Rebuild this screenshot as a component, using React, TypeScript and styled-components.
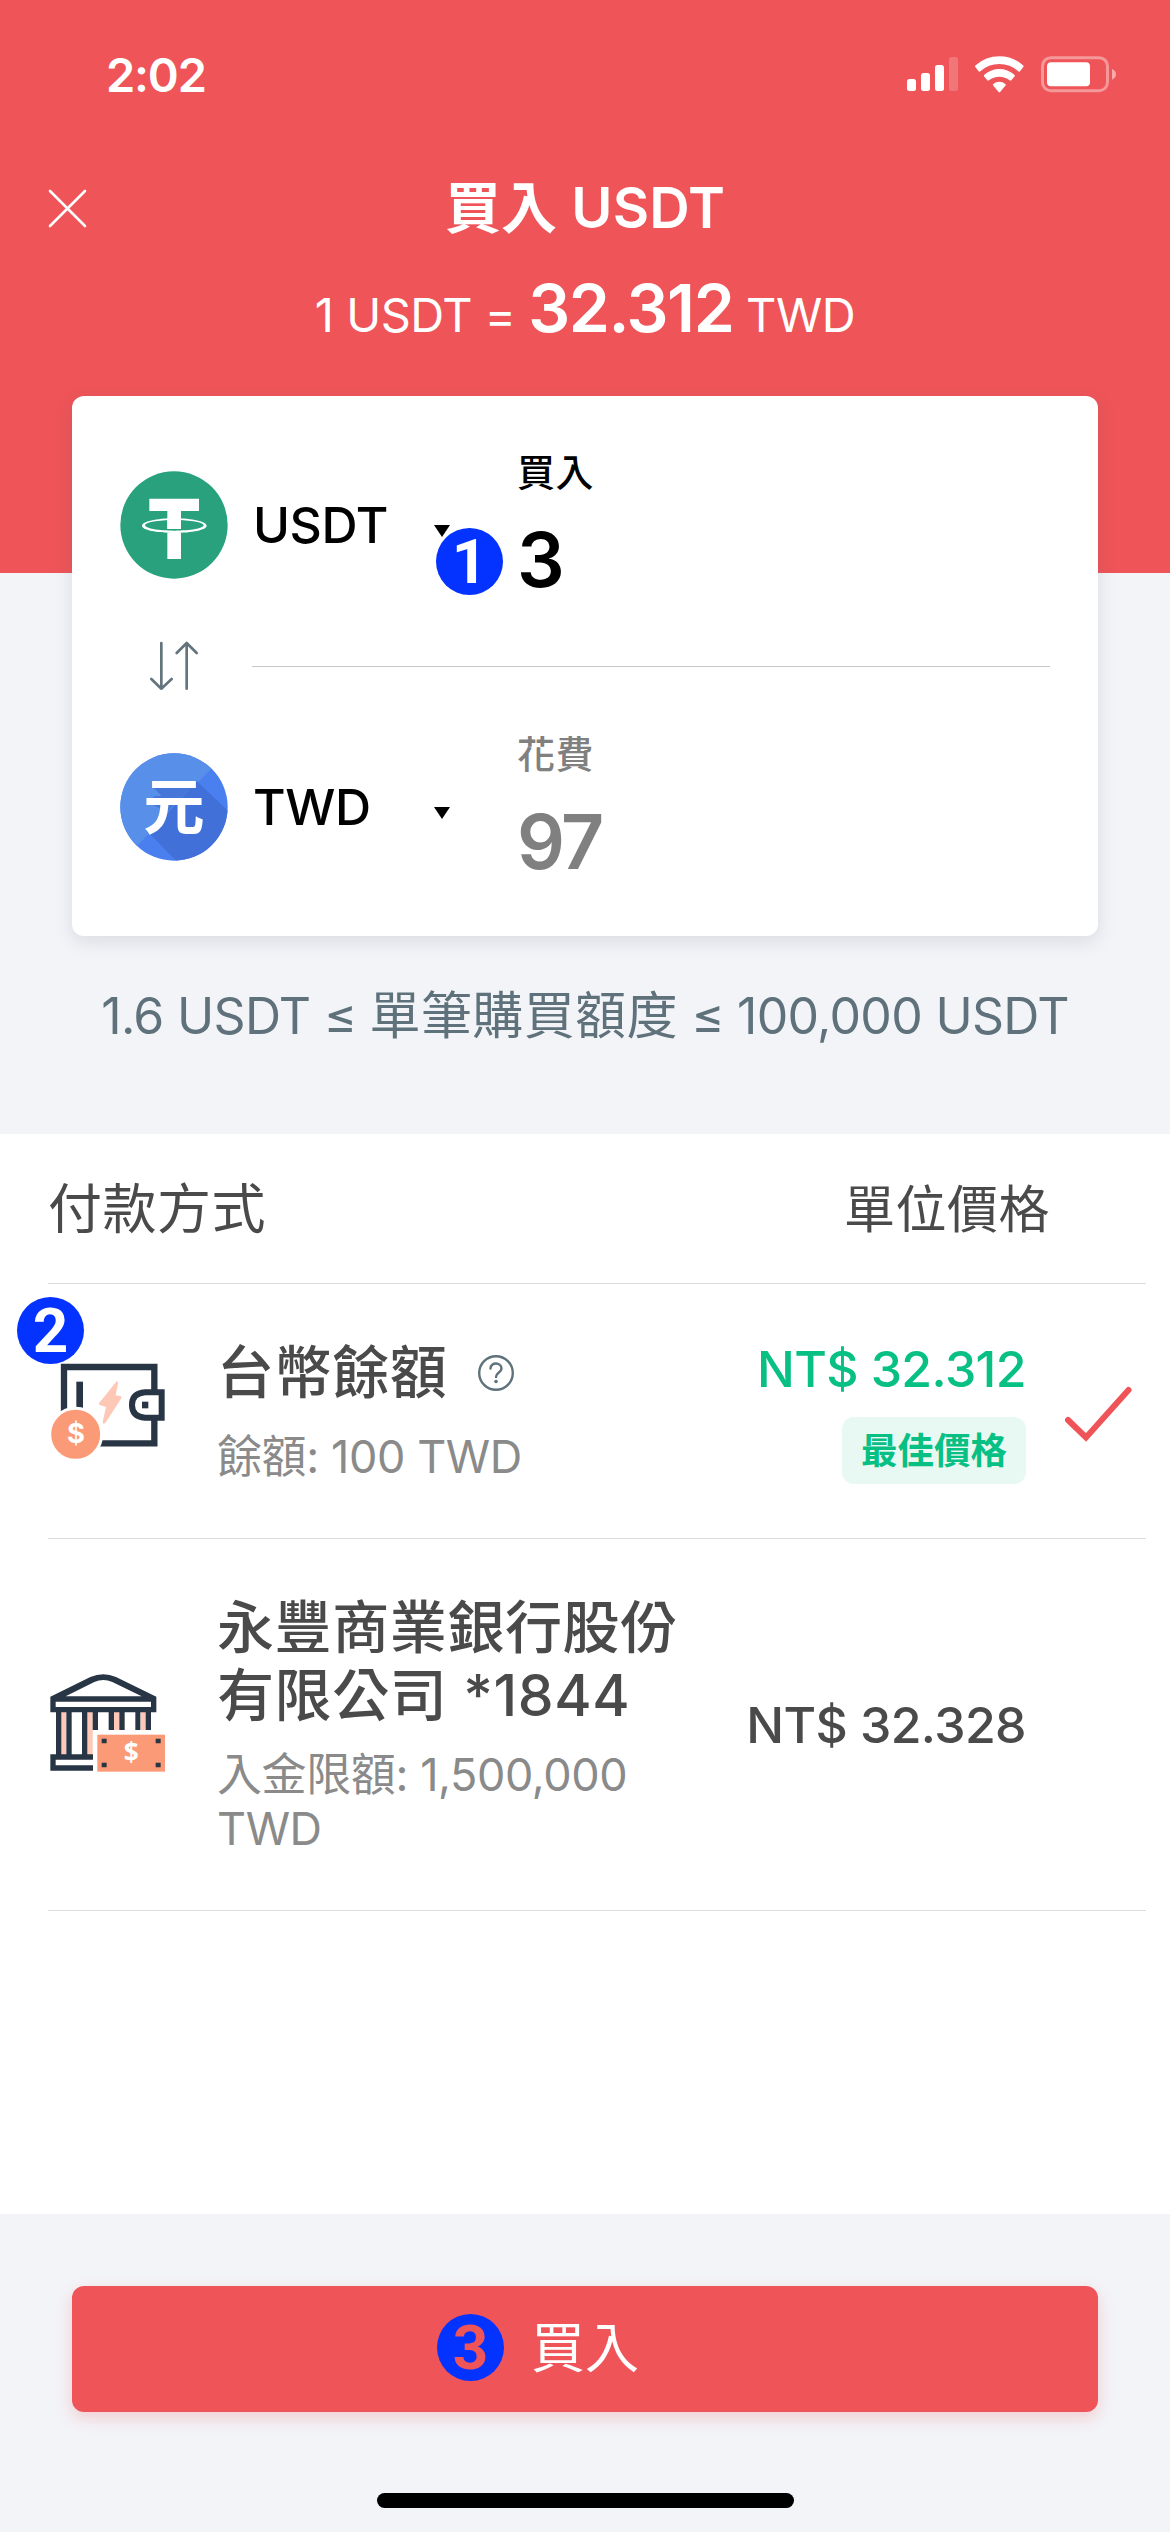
import React from "react";
import styled, { createGlobalStyle } from "styled-components";

const red = "#ee5458";
const mist = "#f3f4f8";
const ink = "#4a4a4a";
const slate = "#5f727c";
const navy = "#283545";
const coral = "#fb9a76";
const blush = "#ffc7b6";
const fontStack = `Inter, "Noto Sans CJK TC", sans-serif`;

const GlobalStyle = createGlobalStyle`
  * { box-sizing: border-box; }
  body { margin: 0; background: #fff; font-family: ${fontStack}; }
  svg { display: block; flex: none; }
`;

const Screen = styled.main`
  width: 1170px;
  height: 2532px;
  display: flex;
  flex-direction: column;
  overflow: hidden;
  background: #fff;
`;

const Header = styled.header`
  height: 573px;
  flex: none;
  background: ${red};
  color: #fff;
`;

const StatusBar = styled.div`
  height: 148px;
  padding: 0 53px 0 106px;
  display: flex;
  align-items: center;
  justify-content: space-between;
`;

const Clock = styled.span`
  font-size: 47px;
  font-weight: 600;
  letter-spacing: -1.2px;
`;

const StatusIcons = styled.div`
  display: flex;
  align-items: center;
  gap: 17px;
`;

const NavBar = styled.div`
  height: 120px;
  padding: 0 48px;
  display: grid;
  grid-template-columns: 40px 1fr 40px;
  align-items: center;
`;

const Title = styled.h1`
  margin: 0;
  text-align: center;
  font-size: 56px;
  line-height: 80px;
  font-weight: 600;
  letter-spacing: 0.1px;
  white-space: pre;
`;

const Rate = styled.p`
  margin: 0;
  height: 80px;
  display: flex;
  justify-content: center;
  align-items: baseline;
  font-size: 47px;
  line-height: 80px;
  letter-spacing: -0.5px;
  white-space: pre;
`;

const RateValue = styled.strong`
  font-size: 66px;
  font-weight: 600;
  letter-spacing: -1.4px;
`;

const Summary = styled.section`
  height: 561px;
  flex: none;
  padding: 0 72px;
  background: ${mist};
`;

const Card = styled.div`
  position: relative;
  margin-top: -177px;
  height: 540px;
  border-radius: 12px;
  background: #fff;
  box-shadow: 0 6px 18px rgba(90, 100, 120, 0.16);
`;

const AmountRow = styled.div`
  height: 258px;
  padding: 0 48px;
  display: grid;
  grid-template-columns: 132px 265px 1fr;
  align-items: center;
`;

const Currency = styled.div`
  display: flex;
  align-items: center;
  justify-content: space-between;
  padding: 0 67px 0 1px;
  font-size: 50px;
  line-height: 60px;
  font-weight: 500;
  letter-spacing: -0.4px;
  color: #000;
`;

const Caret = styled.i`
  margin-top: 11px;
  border-style: solid;
  border-width: 12px 8px 0;
  border-color: #000 transparent transparent;
`;

const Field = styled.div<{ $muted?: boolean }>`
  display: flex;
  flex-direction: column;
  gap: 15px;
  color: ${(p) => (p.$muted ? "#808080" : "#000")};
`;

const FieldLabel = styled.span`
  font-size: 38px;
  line-height: 54px;
  font-weight: 500;
  letter-spacing: 0.4px;
`;

const FieldValue = styled.span`
  font-size: 75px;
  line-height: 91px;
  font-weight: 600;
  letter-spacing: -2.5px;
`;

const SwapRow = styled.div`
  height: 24px;
  padding: 0 48px;
  display: flex;
  align-items: center;
`;

const SwapSlot = styled.div`
  width: 132px;
  padding-left: 29px;
`;

const SwapLine = styled.div`
  flex: 1;
  height: 1px;
  background: #c4c6c8;
`;

const Limits = styled.p`
  margin: 46px -40px 0;
  text-align: center;
  font-size: 50px;
  line-height: 68px;
  letter-spacing: -0.7px;
  white-space: nowrap;
  color: ${slate};
`;

const LimitsLabel = styled.span`
  font-size: 51px;
  letter-spacing: 0.4px;
`;

const Methods = styled.section`
  height: 1080px;
  flex: none;
  padding: 0 24px 0 48px;
`;

const MethodsHead = styled.div`
  height: 150px;
  padding-right: 96px;
  display: flex;
  align-items: center;
  justify-content: space-between;
  border-bottom: 1px solid #dadcdd;
  color: ${ink};
`;

const HeadCell = styled.span<{ $size: number }>`
  padding-top: 2px;
  font-size: ${(p) => p.$size}px;
  line-height: 68px;
  letter-spacing: 0.5px;
`;

const MethodRow = styled.div<{ $height: number }>`
  position: relative;
  height: ${(p) => p.$height}px;
  display: flex;
  align-items: center;
  border-bottom: 1px solid #dadcdd;
`;

const MethodIcon = styled.div`
  padding-bottom: 3px;
`;

const MethodText = styled.div<{ $lift?: number }>`
  width: 470px;
  margin-left: 49px;
  padding-bottom: ${(p) => p.$lift ?? 0}px;
`;

const MethodName = styled.div<{ $height?: number }>`
  min-height: ${(p) => p.$height ?? 68}px;
  display: flex;
  align-items: center;
  gap: 30px;
  font-size: 57px;
  line-height: 68px;
  font-weight: 500;
  letter-spacing: 0.6px;
  color: ${ink};
`;

const MethodNote = styled.div<{ $gap: number }>`
  margin-top: ${(p) => p.$gap}px;
  font-size: 45px;
  line-height: 54px;
  letter-spacing: -0.4px;
  color: #8a8a8a;
`;

const PriceColumn = styled.div`
  flex: 1;
  margin-right: 120px;
  display: flex;
  flex-direction: column;
  align-items: flex-end;
  gap: 18px;
`;

const Price = styled.span<{ $best?: boolean }>`
  font-size: 50px;
  line-height: 60px;
  font-weight: 500;
  letter-spacing: -0.6px;
  white-space: nowrap;
  color: ${(p) => (p.$best ? "#08bf84" : ink)};
`;

const BestTag = styled.span`
  height: 67px;
  padding: 1px 19px 0;
  border-radius: 12px;
  background: #e8f8f3;
  color: #08bf84;
  font-size: 36.5px;
  line-height: 67px;
  font-weight: 700;
`;

const CheckSlot = styled.div`
  position: absolute;
  right: 14px;
  top: 102px;
`;

const Footer = styled.footer`
  flex: 1;
  padding: 72px 72px 24px;
  display: flex;
  flex-direction: column;
  justify-content: space-between;
  align-items: center;
  background: ${mist};
`;

const BuyButton = styled.button`
  position: relative;
  width: 100%;
  height: 126px;
  border: 0;
  border-radius: 12px;
  background: ${red};
  color: #fff;
  font: 400 54px/80px ${fontStack};
  box-shadow: 0 6px 16px rgba(238, 84, 88, 0.24);
`;

const HomeIndicator = styled.div`
  width: 417px;
  height: 15px;
  border-radius: 8px;
  background: #000;
`;

const StepBadge = styled.span<{ $x: number; $y: number; $color?: string }>`
  position: absolute;
  left: ${(p) => p.$x}px;
  top: ${(p) => p.$y}px;
  width: 67px;
  height: 67px;
  border-radius: 50%;
  background: #0433ff;
  color: ${(p) => p.$color ?? "#fff"};
  font: 700 62px/68px Roboto, sans-serif;
  text-align: center;
`;

const SignalIcon = () => (
  <svg width="51" height="36" viewBox="0 0 51 36" fill="#fff">
    <rect x="0" y="23" width="9" height="12" rx="2.5" />
    <rect x="14" y="17" width="9" height="18" rx="2.5" />
    <rect x="28" y="9" width="9" height="26" rx="2.5" />
    <rect x="42" y="1" width="9" height="34" rx="2.5" opacity="0.2" />
  </svg>
);

const WifiIcon = () => (
  <svg width="49" height="37" viewBox="284 44 147 111" fill="#fff">
    <path d="M285 77Q283 75 286 72Q316 45 357 45Q398 45 428 72Q431 75 429 77L419 90Q417 93 414 90Q390 68 357 68Q324 68 300 90Q297 93 295 90Z" />
    <path d="M311 105Q309 103 312 100Q332 83 357 83Q382 83 402 100Q405 103 403 105L393 117Q391 119 388 117Q374 106 357 106Q340 106 326 117Q323 119 321 117Z" />
    <path d="M338 132Q336 130 339 128Q347 121 357 121Q367 121 375 128Q378 130 376 132L360 151Q357 155 354 151Z" />
  </svg>
);

const BatteryIcon = () => (
  <svg width="76" height="37" viewBox="480 47 228 111" fill="#fff">
    <rect x="484.500" y="52" width="195" height="99" rx="25" fill="none" stroke="#fff" strokeWidth="9" opacity="0.4" />
    <rect x="498" y="66" width="129" height="72" rx="12" />
    <path d="M693 86Q705 91 705 102Q705 113 693 118Z" opacity="0.5" />
  </svg>
);

const CloseIcon = () => (
  <svg width="39" height="39" viewBox="0 0 39 39" stroke="#fff" strokeWidth="2.6" strokeLinecap="round">
    <path d="M2 2L37 37M37 2L2 37" />
  </svg>
);

const TetherIcon = () => (
  <svg width="108" height="108" viewBox="15 17 324 324">
    <circle cx="177" cy="179" r="161" fill="#28a17c" />
    <path d="M103 100H252V137H198V191H157V137H103Z" fill="#fff" />
    <path d="M157 202H198V281H157Z" fill="#fff" />
    <path
      fillRule="evenodd"
      fill="#fff"
      d="M81 181.500C81 169 124 159 178 159S275 169 275 181.500S232 203 178 203S81 194 81 181.500ZM90 180C90 189 129 196 178 196S266 189 266 180S227 164 178 164S90 171 90 180Z"
    />
    <path d="M157 159H198V190H157Z" fill="#fff" />
  </svg>
);

const YuanIcon = () => (
  <svg width="108" height="108" viewBox="15 863 324 324">
    <defs>
      <clipPath id="coin">
        <circle cx="177" cy="1025" r="161" />
      </clipPath>
    </defs>
    <g clipPath="url(#coin)">
      <rect x="15" y="863" width="324" height="324" fill="#4a7fef" />
      <path d="M15 863H334L67 1141L15 1190Z" fill="#588fe9" />
      <path d="M245 947L345 1042V1190H187L103 1104Z" fill="#4170d8" />
      <path d="M111 963L245 948L157 1040L96 1009L120 992H140Z" fill="#4677d8" />
    </g>
    <text x="177" y="1090" textAnchor="middle" fontSize="184" fontWeight="700" fontFamily='"Noto Sans CJK TC", sans-serif' fill="#fff">
      元
    </text>
  </svg>
);

const SwapIcon = () => (
  <svg width="50" height="50" viewBox="102 528 150 150" fill="none" stroke="#64747d" strokeWidth="8" strokeLinecap="round" strokeLinejoin="round">
    <path d="M139 534V671M109 642L139 671L170 642" />
    <path d="M215 671V534M185 564L215 534L245 564" />
  </svg>
);

const WalletIcon = () => (
  <svg width="120" height="100" viewBox="24 60 360 300">
    <path d="M72 215V81H343V150M343 240V310H178" fill="none" stroke={navy} strokeWidth="19" />
    <path d="M119 125V205" stroke={navy} strokeWidth="20" />
    <path d="M365 157V233H315Q276 230 276 195T315 157Z" fill="#fff" stroke={navy} strokeWidth="18" />
    <rect x="306" y="185" width="19" height="20" fill={navy} />
    <path d="M230 124Q235 123 234 129L227 166L243 169Q246 171 243 176L196 249Q189 254 188 246L198 201L179 195Q175 192 178 188Z" fill={blush} />
    <circle cx="107" cy="283" r="78" fill={coral} stroke="#fff" strokeWidth="9" />
    <text x="108" y="310" textAnchor="middle" fontSize="82" fontWeight="700" fontFamily="Inter, sans-serif" fill="#fff">
      $
    </text>
  </svg>
);

const BankIcon = () => (
  <svg width="120" height="100" viewBox="24 40 360 300">
    <path d="M64 156H78V286H64ZM142 156H158V286H142ZM222 156H238V212H222ZM302 156H317V212H302Z" fill={blush} />
    <path
      d="M48 156H64V286H48ZM79 156H95V286H79ZM126 156H142V286H126ZM158 156H174V212H158ZM206 156H222V212H206ZM238 156H254V212H238ZM286 156H301V212H286ZM317 156H333V212H317Z"
      fill={navy}
    />
    <path d="M31 111L151 52Q190 36 228 52L349 111V158H31ZM77 110H305L217 67Q190 55 163 67ZM47 126V142H333V126Z" fillRule="evenodd" fill={navy} />
    <path d="M31 284H159V300H47V317H159V333H31Z" fill={navy} />
    <path d="M159 211H384V340H159Z" fill="#fff" />
    <rect x="172" y="225" width="203" height="111" fill={coral} />
    <path d="M185 237H200V251H185ZM347 237H362V251H347ZM185 309H200V323H185ZM347 309H362V323H347Z" fill={navy} />
    <text x="274" y="308" textAnchor="middle" fontSize="79" fontWeight="700" fontFamily='"Open Sans", sans-serif' fill="#fff">
      $
    </text>
  </svg>
);

const HelpIcon = () => (
  <svg width="38" height="38" viewBox="0 0 38 38" fill="none" stroke={slate} strokeWidth="2.400" strokeLinecap="round">
    <circle cx="19" cy="19" r="16.800" />
    <path d="M13.500 14.500C13.500 7.800 24.500 8 24.500 14.500C24.500 18.500 19 18.500 19 23" />
    <circle cx="19" cy="27.500" r="1.800" fill={slate} stroke="none" />
  </svg>
);

const CheckIcon = () => (
  <svg width="68" height="60" viewBox="0 0 68 60" fill="none" stroke={red} strokeWidth="6" strokeLinecap="round">
    <path d="M4 34L22 51.500L64.500 4" strokeLinejoin="miter" />
  </svg>
);

export default function App() {
  return (
    <Screen>
      <GlobalStyle />
      <Header>
        <StatusBar>
          <Clock>2:02</Clock>
          <StatusIcons>
            <SignalIcon />
            <WifiIcon />
            <BatteryIcon />
          </StatusIcons>
        </StatusBar>
        <NavBar>
          <CloseIcon />
          <Title>買入 USDT</Title>
        </NavBar>
        <Rate>
          1 USDT = <RateValue>32.312</RateValue> TWD
        </Rate>
      </Header>

      <Summary>
        <Card>
          <AmountRow>
            <TetherIcon />
            <Currency>
              USDT
              <Caret />
            </Currency>
            <Field>
              <FieldLabel>買入</FieldLabel>
              <FieldValue>3</FieldValue>
            </Field>
          </AmountRow>
          <SwapRow>
            <SwapSlot>
              <SwapIcon />
            </SwapSlot>
            <SwapLine />
          </SwapRow>
          <AmountRow>
            <YuanIcon />
            <Currency>
              TWD
              <Caret />
            </Currency>
            <Field $muted>
              <FieldLabel>花費</FieldLabel>
              <FieldValue>97</FieldValue>
            </Field>
          </AmountRow>
          <StepBadge $x={364} $y={132}>1</StepBadge>
        </Card>
        <Limits>
          1.6 USDT ≤ <LimitsLabel>單筆購買額度</LimitsLabel> ≤ 100,000 USDT
        </Limits>
      </Summary>

      <Methods>
        <MethodsHead>
          <HeadCell $size={54}>付款方式</HeadCell>
          <HeadCell $size={51}>單位價格</HeadCell>
        </MethodsHead>
        <MethodRow $height={255}>
          <MethodIcon>
            <WalletIcon />
          </MethodIcon>
          <MethodText $lift={3}>
            <MethodName $height={75}>
              台幣餘額
              <HelpIcon />
            </MethodName>
            <MethodNote $gap={20}>餘額: 100 TWD</MethodNote>
          </MethodText>
          <PriceColumn>
            <Price $best>NT$ 32.312</Price>
            <BestTag>最佳價格</BestTag>
          </PriceColumn>
          <CheckSlot>
            <CheckIcon />
          </CheckSlot>
          <StepBadge $x={-31} $y={13}>2</StepBadge>
        </MethodRow>
        <MethodRow $height={372}>
          <MethodIcon>
            <BankIcon />
          </MethodIcon>
          <MethodText>
            <MethodName>永豐商業銀行股份有限公司 *1844</MethodName>
            <MethodNote $gap={18}>入金限額: 1,500,000 TWD</MethodNote>
          </MethodText>
          <PriceColumn>
            <Price>NT$ 32.328</Price>
          </PriceColumn>
        </MethodRow>
      </Methods>

      <Footer>
        <BuyButton>
          買入
          <StepBadge $x={365} $y={28} $color={red}>3</StepBadge>
        </BuyButton>
        <HomeIndicator />
      </Footer>
    </Screen>
  );
}
